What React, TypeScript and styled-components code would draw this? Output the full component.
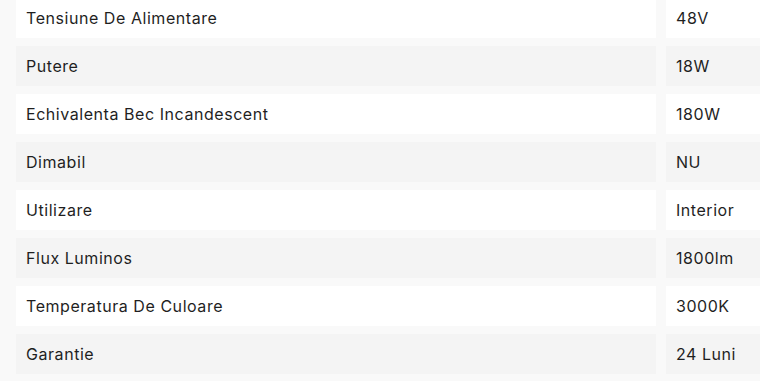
import React from "react";
import styled, { createGlobalStyle } from "styled-components";

const GlobalStyle = createGlobalStyle`
  html, body {
    margin: 0;
    padding: 0;
    background: #f9f9f9;
    overflow: hidden;
  }
`;

const specs: [string, string][] = [
  ["Tensiune De Alimentare", "48V"],
  ["Putere", "18W"],
  ["Echivalenta Bec Incandescent", "180W"],
  ["Dimabil", "NU"],
  ["Utilizare", "Interior"],
  ["Flux Luminos", "1800lm"],
  ["Temperatura De Culoare", "3000K"],
  ["Garantie", "24 Luni"],
];

const SpecTable = styled.div`
  display: grid;
  grid-template-columns: 640px 1fr;
  column-gap: 10px;
  row-gap: 8px;
  padding-left: 16px;
  margin-top: -2px;
`;

const Cell = styled.div<{ $alt: boolean }>`
  height: 40px;
  display: flex;
  align-items: center;
  padding: 0 10px;
  white-space: nowrap;
  overflow: hidden;
  background: ${(p) => (p.$alt ? "#f4f4f4" : "#ffffff")};
  color: #1f1f1f;
  font-family: Inter, "Noto Sans", sans-serif;
  font-size: 16px;
  font-weight: 400;
  letter-spacing: 0.55px;
`;

export default function App() {
  return (
    <>
      <GlobalStyle />
      <SpecTable>
        {specs.map(([label, value], i) => (
          <React.Fragment key={label}>
            <Cell $alt={i % 2 === 1}>{label}</Cell>
            <Cell $alt={i % 2 === 1}>{value}</Cell>
          </React.Fragment>
        ))}
      </SpecTable>
    </>
  );
}
